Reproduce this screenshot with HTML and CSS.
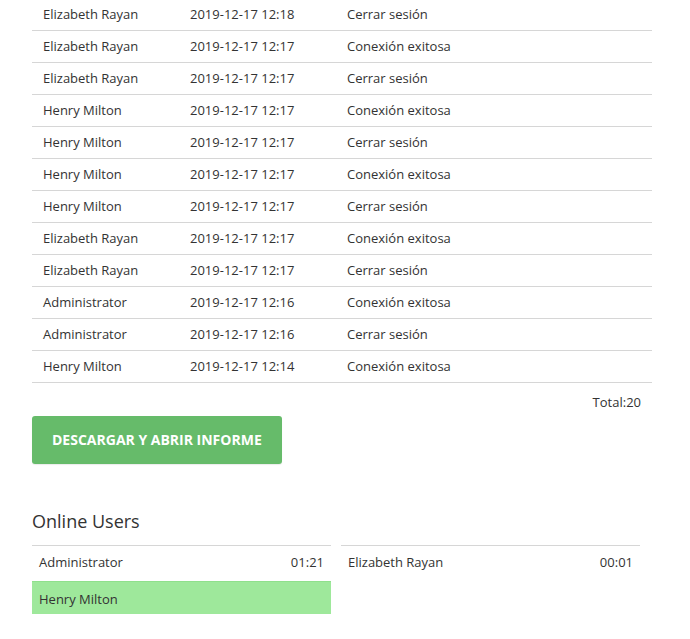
FILE: index.html
```html
<!DOCTYPE html>
<html>
<head>
<meta charset="utf-8">
<link rel="stylesheet" href="styles.css">
</head>
<body>
<div class="page">
  <div class="log">
    <div class="row"><span>Elizabeth Rayan</span><span>2019-12-17 12:18</span><span>Cerrar sesión</span></div>
    <div class="row"><span>Elizabeth Rayan</span><span>2019-12-17 12:17</span><span>Conexión exitosa</span></div>
    <div class="row"><span>Elizabeth Rayan</span><span>2019-12-17 12:17</span><span>Cerrar sesión</span></div>
    <div class="row"><span>Henry Milton</span><span>2019-12-17 12:17</span><span>Conexión exitosa</span></div>
    <div class="row"><span>Henry Milton</span><span>2019-12-17 12:17</span><span>Cerrar sesión</span></div>
    <div class="row"><span>Henry Milton</span><span>2019-12-17 12:17</span><span>Conexión exitosa</span></div>
    <div class="row"><span>Henry Milton</span><span>2019-12-17 12:17</span><span>Cerrar sesión</span></div>
    <div class="row"><span>Elizabeth Rayan</span><span>2019-12-17 12:17</span><span>Conexión exitosa</span></div>
    <div class="row"><span>Elizabeth Rayan</span><span>2019-12-17 12:17</span><span>Cerrar sesión</span></div>
    <div class="row"><span>Administrator</span><span>2019-12-17 12:16</span><span>Conexión exitosa</span></div>
    <div class="row"><span>Administrator</span><span>2019-12-17 12:16</span><span>Cerrar sesión</span></div>
    <div class="row"><span>Henry Milton</span><span>2019-12-17 12:14</span><span>Conexión exitosa</span></div>
  </div>
  <div class="total">Total:20</div>
  <button class="btn">Descargar y abrir informe</button>
  <h2 class="title">Online Users</h2>
  <div class="online">
    <div class="col">
      <div class="user"><span>Administrator</span><span>01:21</span></div>
      <div class="user active"><span>Henry Milton</span><span></span></div>
    </div>
    <div class="col">
      <div class="user"><span>Elizabeth Rayan</span><span>00:01</span></div>
    </div>
  </div>
</div>
</body>
</html>
```
FILE: styles.css
```css
html, body {
  margin: 0;
  padding: 0;
  background: #fff;
}
body {
  font-family: "Open Sans", "Liberation Sans", sans-serif;
  font-size: 13px;
  color: #333;
}
.page {
  padding: 0 38px 0 32px;
}
.log {
  margin-top: -1px;
}
.row {
  display: grid;
  grid-template-columns: 147px 157px 1fr;
  height: 30px;
  padding-bottom: 1px;
  align-items: center;
  border-bottom: 1px solid #d6d6d6;
}
.row span {
  padding-left: 11px;
  line-height: 18px;
}
.total {
  text-align: right;
  padding: 10px 11px 0 0;
  line-height: 18px;
}
.btn {
  display: block;
  margin-top: 5px;
  height: 48px;
  padding: 0 20px 2px;
  border: none;
  border-radius: 3px;
  background: #66bb6a;
  color: #fff;
  font-family: "Open Sans", "Liberation Sans", sans-serif;
  font-weight: 700;
  font-size: 14px;
  text-transform: uppercase;
  box-shadow: 0 1px 1px rgba(0,0,0,0.08);
}
.title {
  margin: 45px 0 12px;
  font-size: 18px;
  font-weight: 400;
  line-height: 24px;
  color: #333;
}
.online {
  display: grid;
  grid-template-columns: 299px 299px;
  column-gap: 10px;
}
.col {
  border-top: 1px solid #d6d6d6;
}
.user {
  display: flex;
  justify-content: space-between;
  padding: 7px 7px 10px 7px;
  line-height: 18px;
}
.user.active {
  background: #9ee89b;
  border-top: 1px solid #8fe08c;
  padding: 8px 7px 6px 7px;
}
```
